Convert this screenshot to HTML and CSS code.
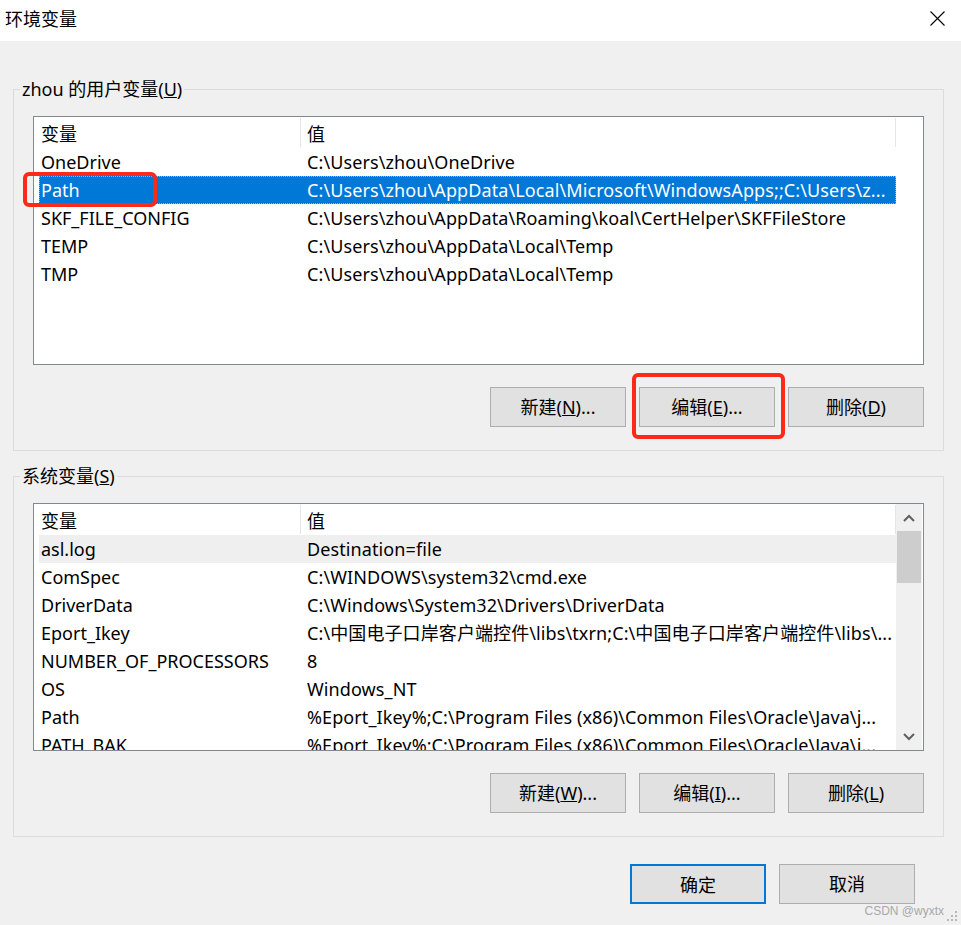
FILE: index.html
```html
<!DOCTYPE html>
<html lang="zh-CN">
<head>
    <meta charset="UTF-8">
    <title>环境变量</title>
    <link rel="stylesheet" href="styles.css">
</head>
<body>
    <!-- Title bar -->
    <div class="titlebar">
        <span class="title">环境变量</span>
        <svg class="close" viewBox="0 0 15 15"><path d="M0.5 0.5 L14.5 14.5 M14.5 0.5 L0.5 14.5" stroke="#000" stroke-width="1.1" fill="none"/></svg>
    </div>

    <div class="content">
        <!-- User variables -->
        <fieldset class="group">
            <legend>zhou 的用户变量(<u>U</u>)</legend>
            <div class="list">
                <div class="list-body">
                    <div class="list-head"><span class="cell-name">变量</span><span class="cell-value">值</span></div>
                    <div class="row"><span class="cell-name">OneDrive</span><span class="cell-value">C:\Users\zhou\OneDrive</span></div>
                    <div class="row selected">
                        <span class="cell-name">Path</span><span class="cell-value">C:\Users\zhou\AppData\Local\Microsoft\WindowsApps;;C:\Users\z...</span>
                        <span class="mark mark-path"></span>
                    </div>
                    <div class="row"><span class="cell-name">SKF_FILE_CONFIG</span><span class="cell-value">C:\Users\zhou\AppData\Roaming\koal\CertHelper\SKFFileStore</span></div>
                    <div class="row"><span class="cell-name">TEMP</span><span class="cell-value">C:\Users\zhou\AppData\Local\Temp</span></div>
                    <div class="row"><span class="cell-name">TMP</span><span class="cell-value">C:\Users\zhou\AppData\Local\Temp</span></div>
                </div>
            </div>
            <div class="buttons">
                <button class="btn">新建(<u>N</u>)...</button>
                <span class="marked">
                    <button class="btn">编辑(<u>E</u>)...</button>
                    <span class="mark mark-edit"></span>
                </span>
                <button class="btn">删除(<u>D</u>)</button>
            </div>
        </fieldset>

        <!-- System variables -->
        <fieldset class="group">
            <legend>系统变量(<u>S</u>)</legend>
            <div class="list list-sys">
                <div class="list-body">
                    <div class="list-head"><span class="cell-name">变量</span><span class="cell-value">值</span></div>
                    <div class="row hover"><span class="cell-name">asl.log</span><span class="cell-value">Destination=file</span></div>
                    <div class="row"><span class="cell-name">ComSpec</span><span class="cell-value">C:\WINDOWS\system32\cmd.exe</span></div>
                    <div class="row"><span class="cell-name">DriverData</span><span class="cell-value">C:\Windows\System32\Drivers\DriverData</span></div>
                    <div class="row"><span class="cell-name">Eport_Ikey</span><span class="cell-value">C:\中国电子口岸客户端控件\libs\txrn;C:\中国电子口岸客户端控件\libs\...</span></div>
                    <div class="row"><span class="cell-name">NUMBER_OF_PROCESSORS</span><span class="cell-value">8</span></div>
                    <div class="row"><span class="cell-name">OS</span><span class="cell-value">Windows_NT</span></div>
                    <div class="row"><span class="cell-name">Path</span><span class="cell-value">%Eport_Ikey%;C:\Program Files (x86)\Common Files\Oracle\Java\j...</span></div>
                    <div class="row"><span class="cell-name">PATH_BAK</span><span class="cell-value">%Eport_Ikey%;C:\Program Files (x86)\Common Files\Oracle\Java\j...</span></div>
                </div>
                <div class="scrollbar">
                    <div class="sb-btn"><svg viewBox="0 0 12 8"><path d="M1 7 L6 2 L11 7" stroke="#606060" stroke-width="2" fill="none"/></svg></div>
                    <div class="sb-thumb"></div>
                    <div class="sb-track"></div>
                    <div class="sb-btn sb-down"><svg viewBox="0 0 12 8"><path d="M1 1 L6 6 L11 1" stroke="#606060" stroke-width="2" fill="none"/></svg></div>
                </div>
            </div>
            <div class="buttons">
                <button class="btn">新建(<u>W</u>)...</button>
                <button class="btn">编辑(<u>I</u>)...</button>
                <button class="btn">删除(<u>L</u>)</button>
            </div>
        </fieldset>

        <!-- Dialog buttons -->
        <div class="dialog-buttons">
            <button class="btn default">确定</button>
            <button class="btn">取消</button>
        </div>

        <div class="footnote">
            <span class="watermark">CSDN @wyxtx</span>
            <svg class="grip" viewBox="0 0 12 14">
                <rect x="9" y="2" width="2" height="2"/>
                <rect x="9" y="6" width="2" height="2"/>
                <rect x="5" y="6" width="2" height="2"/>
                <rect x="9" y="10" width="2" height="2"/>
                <rect x="5" y="10" width="2" height="2"/>
                <rect x="1" y="10" width="2" height="2"/>
            </svg>
        </div>
    </div>
</body>
</html>
```

FILE: styles.css
```css
* {
    box-sizing: border-box;
}
body {
    margin: 0;
    width: 961px;
    height: 925px;
    overflow: hidden;
    background-color: #f0f0f0;
    color: #000;
    font-family: "Noto Sans", "Noto Sans CJK SC", sans-serif;
    font-size: 18px;
}
.titlebar {
    height: 41px;
    background-color: #fff;
    display: flex;
    justify-content: space-between;
    align-items: flex-start;
}
.title {
    padding: 6px 0 0 5px;
    line-height: 26px;
}
.close {
    width: 15px;
    height: 15px;
    margin: 11px 16px 0 0;
}
.content {
    padding: 36px 0 0 13px;
}
.group {
    width: 930px;
    margin: 0;
    padding: 15px 19px 23px 19px;
    border: 1px solid #dcdcdc;
}
.group + .group {
    margin-top: 13px;
}
.group legend {
    margin-left: -13px;
    padding: 0 2px;
    line-height: 24px;
}
.list {
    width: 891px;
    height: 249px;
    padding-left: 5px;
    border: 1px solid #828790;
    background-color: #fff;
    display: flex;
}
.list-sys {
    height: 248px;
    overflow: hidden;
}
.list-body {
    width: 857px;
    flex-shrink: 0;
}
.list-head,
.row {
    display: grid;
    grid-template-columns: 262px 595px;
}
.list-head {
    height: 31px;
}
.list-head span {
    margin: 1px 0 1px;
    padding-top: 3px;
    line-height: 26px;
    border-right: 1px solid #e5e5e5;
}
.row {
    height: 28px;
    line-height: 28px;
    position: relative;
}
.cell-name {
    padding-left: 2px;
    white-space: nowrap;
}
.cell-value {
    padding-left: 6px;
    white-space: nowrap;
    overflow: hidden;
    letter-spacing: 0.1px;
}
.row.selected {
    background-color: #0078d7;
    color: #fff;
    outline: 1px dotted #e9a24f;
    outline-offset: -1px;
}
.row.hover {
    background-color: #efefef;
}
.scrollbar {
    width: 26px;
    background-color: #f0f0f0;
    display: flex;
    flex-direction: column;
}
.sb-btn {
    height: 27px;
    display: flex;
    align-items: center;
    justify-content: center;
}
.sb-btn svg {
    width: 12px;
    height: 8px;
}
.sb-down {
    height: 26px;
}
.sb-thumb {
    height: 52px;
    margin: 0 1px;
    background-color: #cdcdcd;
}
.sb-track {
    flex: 1;
}
.buttons {
    margin-top: 22px;
    display: flex;
    justify-content: flex-end;
    gap: 13px;
}
.btn {
    width: 136px;
    height: 40px;
    padding: 0;
    background-color: #e1e1e1;
    border: 1px solid #adadad;
    color: #000;
    font-family: inherit;
    font-size: 18px;
    line-height: 38px;
}
.btn.default {
    border: 2px solid #0078d7;
}
.marked {
    position: relative;
    display: flex;
}
.mark {
    position: absolute;
    z-index: 1;
    border: 4px solid #fd2a1c;
    border-radius: 6px;
}
.mark-path {
    left: -16px;
    top: -4px;
    width: 134px;
    height: 35px;
}
.mark-edit {
    left: -7px;
    top: -14px;
    width: 153px;
    height: 66px;
}
.dialog-buttons {
    margin-top: 27px;
    padding-right: 46px;
    display: flex;
    justify-content: flex-end;
    gap: 13px;
}
.footnote {
    height: 21px;
    padding-right: 3px;
    display: flex;
    justify-content: flex-end;
    align-items: flex-start;
    gap: 2px;
}
.watermark {
    margin-top: 1px;
    font-family: "Liberation Sans", sans-serif;
    font-size: 12px;
    line-height: 12px;
    color: #a8a8a8;
}
.grip {
    width: 12px;
    height: 14px;
    margin-top: 5px;
    fill: #b8b8b8;
}
```
